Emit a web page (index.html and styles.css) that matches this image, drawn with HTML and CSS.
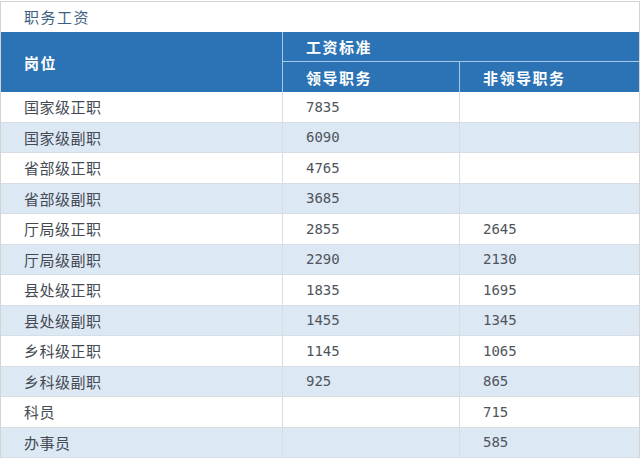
FILE: index.html
```html
<!DOCTYPE html>
<html lang="zh-CN">
<head>
<meta charset="utf-8">
<title>职务工资</title>
<link rel="stylesheet" href="styles.css">
</head>
<body>
<div class="panel">
  <div class="title">职务工资</div>
  <table class="pay">
    <colgroup>
      <col class="c1">
      <col class="c2">
      <col class="c3">
    </colgroup>
    <thead>
      <tr class="h1">
        <th rowspan="2" class="post">岗位</th>
        <th colspan="2" class="std">工资标准</th>
      </tr>
      <tr class="h2">
        <th class="lead">领导职务</th>
        <th class="nonlead">非领导职务</th>
      </tr>
    </thead>
    <tbody>
      <tr><td>国家级正职</td><td class="num">7835</td><td class="num"></td></tr>
      <tr><td>国家级副职</td><td class="num">6090</td><td class="num"></td></tr>
      <tr><td>省部级正职</td><td class="num">4765</td><td class="num"></td></tr>
      <tr><td>省部级副职</td><td class="num">3685</td><td class="num"></td></tr>
      <tr><td>厅局级正职</td><td class="num">2855</td><td class="num">2645</td></tr>
      <tr><td>厅局级副职</td><td class="num">2290</td><td class="num">2130</td></tr>
      <tr><td>县处级正职</td><td class="num">1835</td><td class="num">1695</td></tr>
      <tr><td>县处级副职</td><td class="num">1455</td><td class="num">1345</td></tr>
      <tr><td>乡科级正职</td><td class="num">1145</td><td class="num">1065</td></tr>
      <tr><td>乡科级副职</td><td class="num">925</td><td class="num">865</td></tr>
      <tr><td>科员</td><td class="num"></td><td class="num">715</td></tr>
      <tr><td>办事员</td><td class="num"></td><td class="num">585</td></tr>
    </tbody>
  </table>
</div>
</body>
</html>
```

FILE: styles.css
```css
html, body {
  margin: 0;
  padding: 0;
  background: #ffffff;
}

body {
  padding-top: 1px;
  font-family: "Noto Sans CJK SC", "Noto Sans", sans-serif;
}

.panel {
  border: 1px solid #d4d4d4;
  border-bottom: none;
  background: #ffffff;
}

.title {
  height: 30px;
  line-height: 29px;
  padding-left: 23px;
  font-size: 15px;
  letter-spacing: 1.5px;
  color: #3e5f85;
}

.pay {
  width: 638px;
  table-layout: fixed;
  border-collapse: separate;
  border-spacing: 0;
}

.c1 { width: 282px; }
.c2 { width: 177px; }
.c3 { width: 179px; }

.pay th {
  background: #2c73b5;
  color: #ffffff;
  font-weight: 700;
  font-size: 15px;
  letter-spacing: 1.5px;
  text-align: left;
  padding: 0 0 0 23px;
  vertical-align: middle;
}

.pay .post {
  border-right: 1px solid #a7c9e9;
}

.pay .h1 { height: 30px; }
.pay .h2 { height: 30px; }

.pay .std {
  border-bottom: 1px solid #a7c9e9;
}

.pay .lead {
  border-right: 1px solid #a7c9e9;
}

.pay td {
  padding: 0 0 0 23px;
  font-size: 15px;
  letter-spacing: 0.5px;
  color: #444a52;
  border-bottom: 1px solid #d7dde4;
  vertical-align: middle;
}

.pay td:nth-child(1),
.pay td:nth-child(2) {
  border-right: 1px solid #d7dde4;
}

.pay tbody tr { height: 30.5px; }

.pay tbody tr:nth-child(even) td {
  background: #dde8f5;
}

.pay td.num {
  font-family: "DejaVu Sans Mono", "Liberation Mono", monospace;
  font-size: 14px;
  letter-spacing: 0;
  color: #50555c;
}
```
